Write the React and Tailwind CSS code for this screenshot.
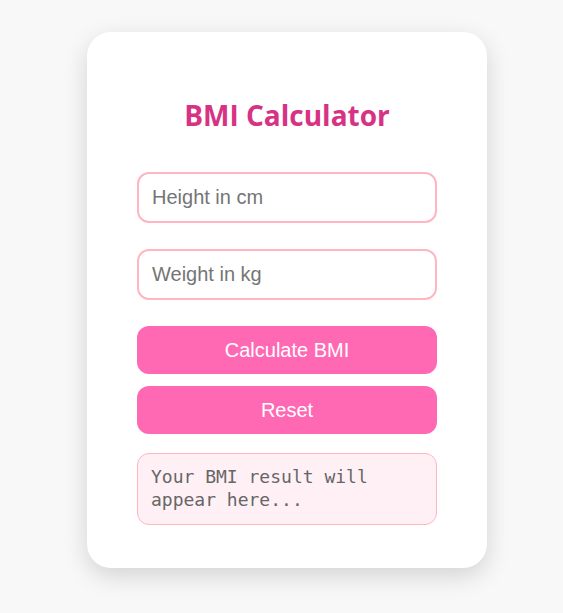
import { useState } from 'react';

const App = () => {
  const [height, setHeight] = useState('');
  const [weight, setWeight] = useState('');
  const [result, setResult] = useState('');

  const calculate = () => {
    const h = parseFloat(height) / 100;
    const w = parseFloat(weight);
    if (!h || !w) {
      setResult('Please enter valid values.');
      return;
    }
    setResult(`Your BMI is ${(w / (h * h)).toFixed(1)}`);
  };

  const reset = () => {
    setHeight('');
    setWeight('');
    setResult('');
  };

  return (
    <div className="min-h-screen bg-[#f8f8f8] flex justify-center pt-[32px] pl-[11px]">
      <div className="w-[400px] h-[536px] bg-white rounded-[24px] shadow-[0_8px_24px_rgba(0,0,0,0.15)] px-[50px] pt-[66px]">
        <h1 className="text-center text-[28px] leading-[34px] font-bold text-[#d63384] font-['Open_Sans',sans-serif]">
          BMI Calculator
        </h1>

        <div className="mt-[40px] flex flex-col font-['Liberation_Sans',Arial,sans-serif]">
          <input
            type="number"
            value={height}
            onChange={e => setHeight(e.target.value)}
            placeholder="Height in cm"
            className="h-[51px] w-full border-2 border-[#ffb6c1] rounded-[12px] px-[13px] text-[20px] text-[#333] placeholder:text-[#757575] outline-none"
          />
          <input
            type="number"
            value={weight}
            onChange={e => setWeight(e.target.value)}
            placeholder="Weight in kg"
            className="mt-[26px] h-[51px] w-full border-2 border-[#ffb6c1] rounded-[12px] px-[13px] text-[20px] text-[#333] placeholder:text-[#757575] outline-none"
          />
          <button
            onClick={calculate}
            className="mt-[26px] h-[48px] w-full bg-[#ff69b4] text-white text-[20px] rounded-[12px]"
          >
            Calculate BMI
          </button>
          <button
            onClick={reset}
            className="mt-[12px] h-[48px] w-full bg-[#ff69b4] text-white text-[20px] rounded-[12px]"
          >
            Reset
          </button>
          <div className="mt-[19px] h-[72px] w-full bg-[#fff0f5] border border-[#ffb6c1] rounded-[12px] px-[13px] pt-[11px] text-[18px] leading-[23px] text-[#666] font-['DejaVu_Sans_Mono',monospace]">
            {result || 'Your BMI result will appear here...'}
          </div>
        </div>
      </div>
    </div>
  );
};

export default App;
